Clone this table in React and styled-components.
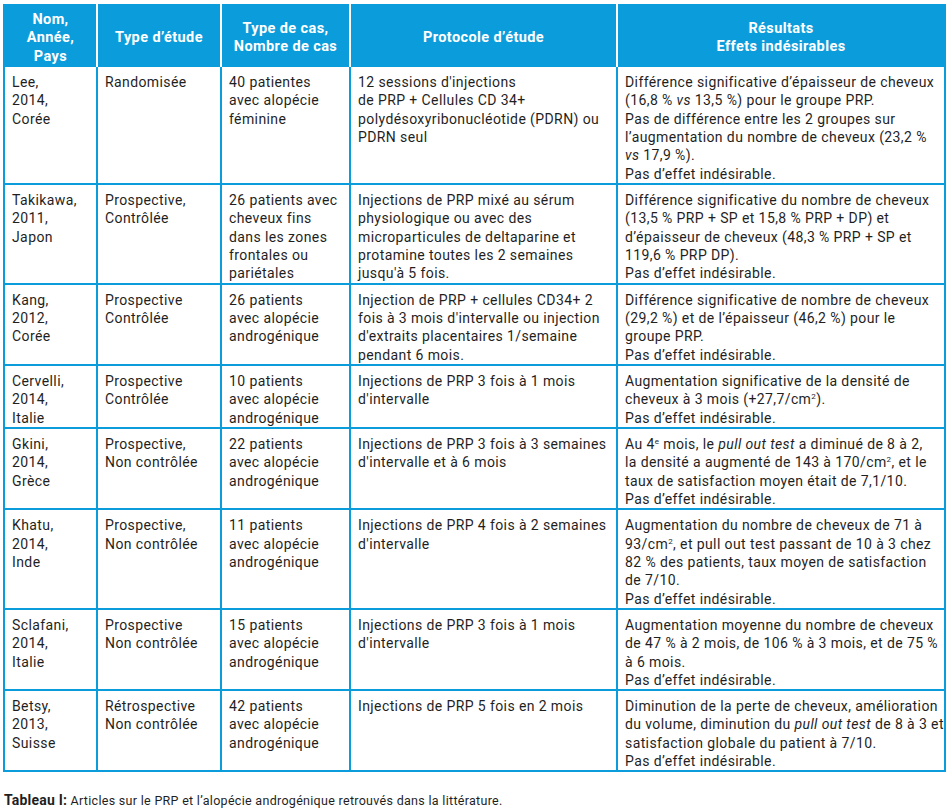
import React from "react";
import styled, { createGlobalStyle } from "styled-components";

const BLUE = "#0b9ddb";
const INK = "#1f1f1f";

const GlobalStyle = createGlobalStyle`
  html, body { margin: 0; padding: 0; background: #ffffff; }
  body { font-family: Roboto, "Liberation Sans", sans-serif; color: ${INK}; }
`;

const Page = styled.div`
  width: 952px;
  box-sizing: border-box;
  padding: 4px 0 0 3px;
`;

const Table = styled.div`
  display: grid;
  grid-template-columns: 93px 124px 129px 267px 328px;
  border-left: 2px solid ${BLUE};
  width: max-content;
  font-size: 14px;
  line-height: 18.33px;
  letter-spacing: 0.4px;
`;

const HeadCell = styled.div`
  background: ${BLUE};
  color: #ffffff;
  font-weight: 700;
  font-size: 14.5px;
  text-align: center;
  display: flex;
  flex-direction: column;
  justify-content: center;
  padding: 7px 4px 1px;
  border-right: 2px solid ${(p) => (p.$last ? BLUE : "#ffffff")};
`;

const Cell = styled.div`
  padding: 6px 6px 0 7px;
  border-right: 2px solid ${BLUE};
  border-bottom: 2px solid ${BLUE};
  color: ${INK};
`;

const Line = styled.span`
  display: block;
  white-space: nowrap;
`;

const Sup = styled.sup`
  font-size: 8px;
  line-height: 0;
  vertical-align: 5px;
`;

const Caption = styled.p`
  margin: 21px 0 0 1px;
  font-size: 12.5px;
  line-height: 15px;
  letter-spacing: 0.3px;
  color: ${INK};
`;

const CaptionLabel = styled.span`
  font-weight: 700;
  font-size: 14px;
  letter-spacing: 0.2px;
`;

const headers = [
  ["Nom,", "Année,", "Pays"],
  ["Type d’étude"],
  ["Type de cas,", "Nombre de cas"],
  ["Protocole d’étude"],
  ["Résultats", "Effets indésirables"],
];

const PAS = "Pas d’effet indésirable.";

const rows = [
  [
    ["Lee,", "2014,", "Corée"],
    ["Randomisée"],
    ["40 patientes", "avec alopécie", "féminine"],
    ["12 sessions d'injections", "de PRP + Cellules CD 34+", "polydésoxyribonucléotide (PDRN) ou", "PDRN seul"],
    [
      "Différence significative d’épaisseur de cheveux",
      <>(16,8 % <i>vs</i> 13,5 %) pour le groupe PRP.</>,
      "Pas de différence entre les 2 groupes sur",
      "l’augmentation du nombre de cheveux (23,2 %",
      <><i>vs</i> 17,9 %).</>,
      PAS,
    ],
  ],
  [
    ["Takikawa,", "2011,", "Japon"],
    ["Prospective,", "Contrôlée"],
    ["26 patients avec", "cheveux fins", "dans les zones", "frontales ou", "pariétales"],
    [
      "Injections de PRP mixé au sérum",
      "physiologique ou avec des",
      "microparticules de deltaparine et",
      "protamine toutes les 2 semaines",
      "jusqu'à 5 fois.",
    ],
    [
      "Différence significative du nombre de cheveux",
      "(13,5 % PRP + SP et 15,8 % PRP + DP) et",
      "d’épaisseur de cheveux (48,3 % PRP + SP et",
      "119,6 % PRP DP).",
      PAS,
    ],
  ],
  [
    ["Kang,", "2012,", "Corée"],
    ["Prospective", "Contrôlée"],
    ["26 patients", "avec alopécie", "androgénique"],
    [
      "Injection de PRP + cellules CD34+ 2",
      "fois à 3 mois d'intervalle ou injection",
      "d'extraits placentaires 1/semaine",
      "pendant 6 mois.",
    ],
    [
      "Différence significative de nombre de cheveux",
      "(29,2 %) et de l’épaisseur (46,2 %) pour le",
      "groupe PRP.",
      PAS,
    ],
  ],
  [
    ["Cervelli,", "2014,", "Italie"],
    ["Prospective", "Contrôlée"],
    ["10 patients", "avec alopécie", "androgénique"],
    ["Injections de PRP 3 fois à 1 mois", "d'intervalle"],
    [
      "Augmentation significative de la densité de",
      <>cheveux à 3 mois (+27,7/cm<Sup>2</Sup>).</>,
      PAS,
    ],
  ],
  [
    ["Gkini,", "2014,", "Grèce"],
    ["Prospective,", "Non contrôlée"],
    ["22 patients", "avec alopécie", "androgénique"],
    ["Injections de PRP 3 fois à 3 semaines", "d'intervalle et à 6 mois"],
    [
      <>Au 4<Sup>e</Sup> mois, le <i>pull out test</i> a diminué de 8 à 2,</>,
      <>la densité a augmenté de 143 à 170/cm<Sup>2</Sup>, et le</>,
      "taux de satisfaction moyen était de 7,1/10.",
      PAS,
    ],
  ],
  [
    ["Khatu,", "2014,", "Inde"],
    ["Prospective,", "Non contrôlée"],
    ["11 patients", "avec alopécie", "androgénique"],
    ["Injections de PRP 4 fois à 2 semaines", "d'intervalle"],
    [
      "Augmentation du nombre de cheveux de 71 à",
      <>93/cm<Sup>2</Sup>, et pull out test passant de 10 à 3 chez</>,
      "82 % des patients, taux moyen de satisfaction",
      "de 7/10.",
      PAS,
    ],
  ],
  [
    ["Sclafani,", "2014,", "Italie"],
    ["Prospective", "Non contrôlée"],
    ["15 patients", "avec alopécie", "androgénique"],
    ["Injections de PRP 3 fois à 1 mois", "d'intervalle"],
    [
      "Augmentation moyenne du nombre de cheveux",
      "de 47 % à 2 mois, de 106 % à 3 mois, et de 75 %",
      "à 6 mois.",
      PAS,
    ],
  ],
  [
    ["Betsy,", "2013,", "Suisse"],
    ["Rétrospective", "Non contrôlée"],
    ["42 patients", "avec alopécie", "androgénique"],
    ["Injections de PRP 5 fois en 2 mois"],
    [
      "Diminution de la perte de cheveux, amélioration",
      <>du volume, diminution du <i>pull out test</i> de 8 à 3 et</>,
      "satisfaction globale du patient à 7/10.",
      PAS,
    ],
  ],
];

const Lines = ({ lines }) =>
  lines.map((l, i) => <Line key={i}>{l}</Line>);

export default function App() {
  return (
    <>
      <GlobalStyle />
      <Page>
        <Table>
          {headers.map((h, i) => (
            <HeadCell key={"h" + i} $last={i === headers.length - 1}>
              <Lines lines={h} />
            </HeadCell>
          ))}
          {rows.map((r, ri) =>
            r.map((c, ci) => (
              <Cell key={ri + "-" + ci}>
                <Lines lines={c} />
              </Cell>
            ))
          )}
        </Table>
        <Caption>
          <CaptionLabel>Tableau I:</CaptionLabel> Articles sur le PRP et l’alopécie androgénique retrouvés dans la littérature.
        </Caption>
      </Page>
    </>
  );
}
